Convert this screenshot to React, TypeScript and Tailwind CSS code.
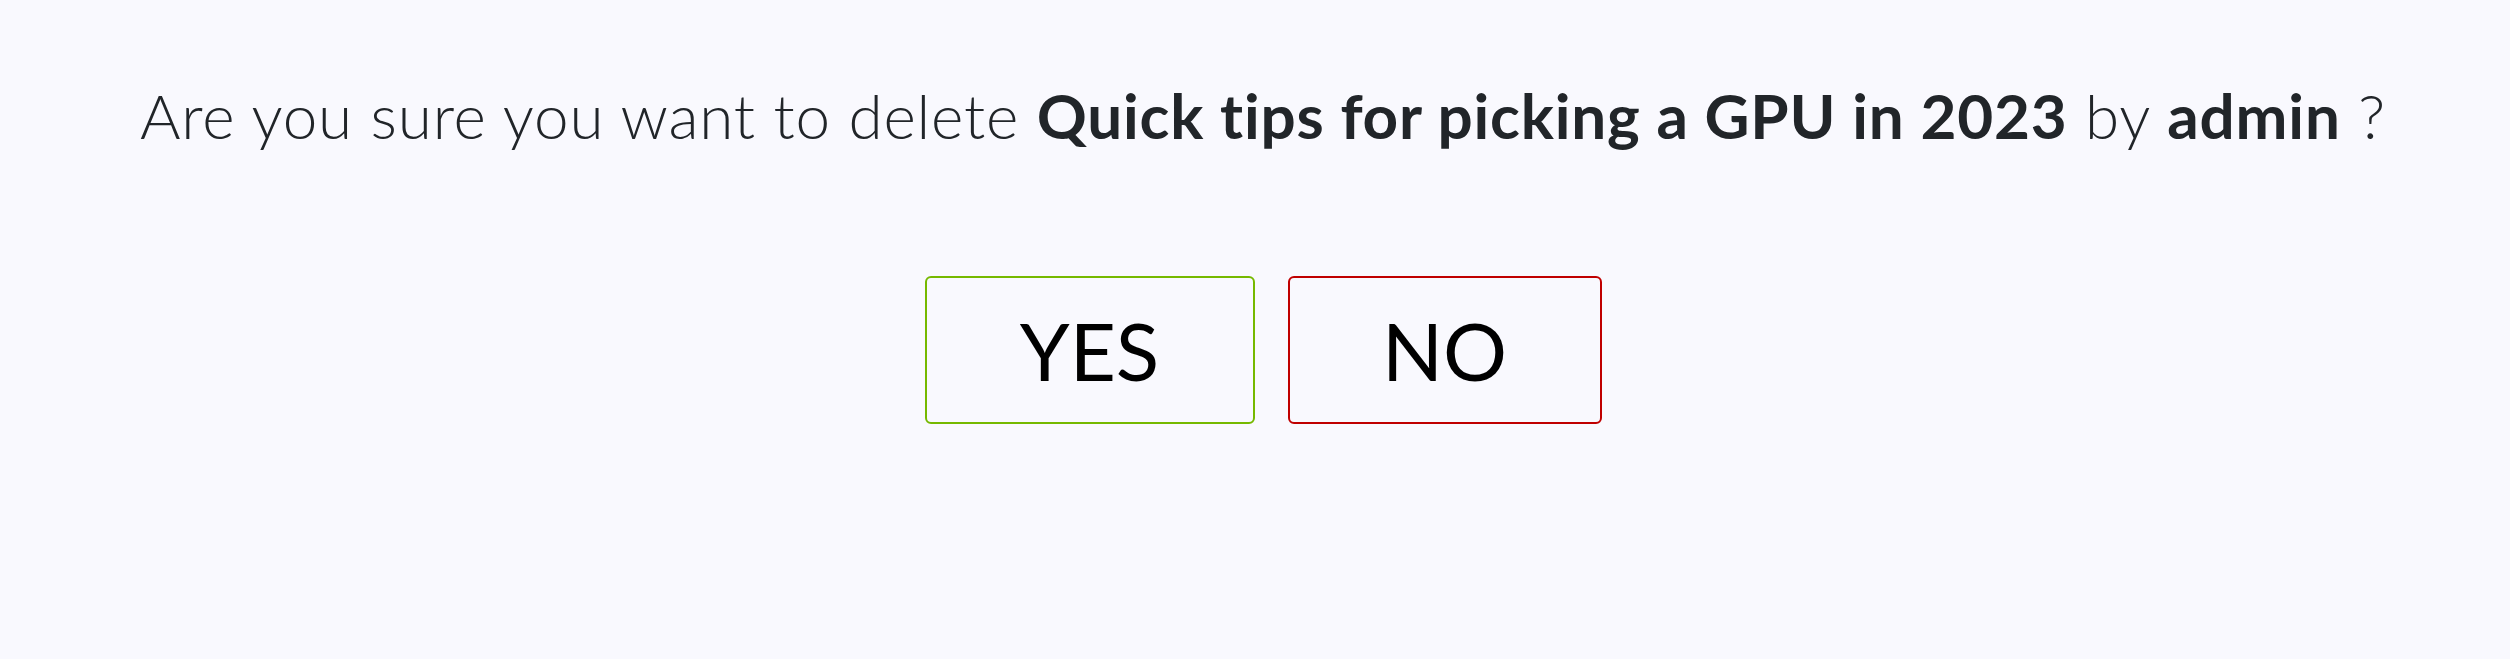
import React from "react";

export default function App() {
  return (
    <div className="w-full h-[659px] bg-[#f9f9fe] text-[#212529]" style={{ fontFamily: "Lato, 'Noto Sans', sans-serif" }}>
      <div className="flex flex-col items-center pt-[78px] pl-[16px]">
        <p className="text-[62px] leading-[1.2] font-light tracking-[0.8px] whitespace-nowrap">
          Are you sure you want to delete <b className="font-bold">Quick tips for picking a GPU in 2023</b> by <b className="font-bold">admin</b> ?
        </p>
        <div className="flex gap-[33px] mt-[124px]">
          <button className="w-[330px] h-[148px] border-2 border-[#76b900] rounded-[6px] text-[80px] font-normal text-black flex items-center justify-center">
            YES
          </button>
          <button className="w-[314px] h-[148px] border-2 border-[#c00000] rounded-[6px] text-[80px] font-normal text-black flex items-center justify-center">
            NO
          </button>
        </div>
      </div>
    </div>
  );
}
